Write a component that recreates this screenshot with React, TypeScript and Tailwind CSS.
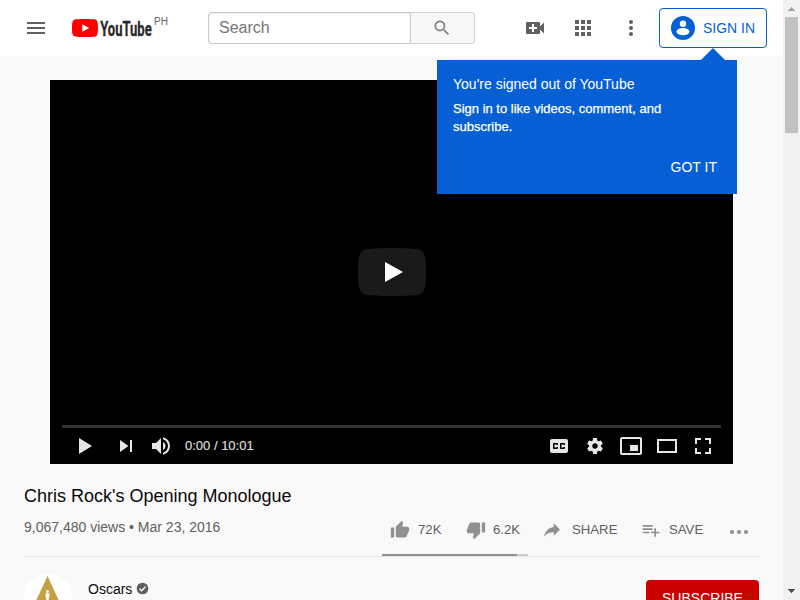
import type { ReactNode } from "react";

function Icon({ d, size = 24, box = 24, className = "" }: { d: string; size?: number; box?: number; className?: string }) {
  return (
    <svg width={size} height={size} viewBox={`0 0 ${box} ${box}`} className={`shrink-0 ${className}`} fill="currentColor" fillRule="evenodd">
      <path d={d} />
    </svg>
  );
}

const MENU = "M3 18h18v-2H3v2zm0-5h18v-2H3v2zm0-7v2h18V6H3z";
const SEARCH =
  "M15.5 14h-.79l-.28-.27C15.41 12.59 16 11.11 16 9.5 16 5.91 13.09 3 9.5 3S3 5.91 3 9.5 5.91 16 9.5 16c1.61 0 3.09-.59 4.23-1.57l.27.28v.79l5 4.99L20.49 19l-4.99-5zm-6 0C7.01 14 5 11.99 5 9.5S7.01 5 9.5 5 14 7.01 14 9.5 11.99 14 9.5 14z";
const CREATE =
  "M17,10.5V7A1,1 0 0,0 16,6H4A1,1 0 0,0 3,7V17A1,1 0 0,0 4,18H16A1,1 0 0,0 17,17V13.5L21,17.5V6.5L17,10.5M14,13H11V16H9V13H6V11H9V8H11V11H14V13Z";
const APPS =
  "M4 8h4V4H4v4zm6 12h4v-4h-4v4zm-6 0h4v-4H4v4zm0-6h4v-4H4v4zm6 0h4v-4h-4v4zm6-10v4h4V4h-4zm-6 4h4V4h-4v4zm6 6h4v-4h-4v4zm0 6h4v-4h-4v4z";
const MORE_VERT =
  "M12 8c1.1 0 2-.9 2-2s-.9-2-2-2-2 .9-2 2 .9 2 2 2zm0 2c-1.1 0-2 .9-2 2s.9 2 2 2 2-.9 2-2-.9-2-2-2zm0 6c-1.1 0-2 .9-2 2s.9 2 2 2 2-.9 2-2-.9-2-2-2z";
const THUMB_UP =
  "M1 21h4V9H1v12zm22-11c0-1.1-.9-2-2-2h-6.31l.95-4.57.03-.32c0-.41-.17-.79-.44-1.06L14.17 1 7.59 7.59C7.22 7.95 7 8.45 7 9v10c0 1.1.9 2 2 2h9c.83 0 1.54-.5 1.84-1.22l3.02-7.05c.09-.23.14-.47.14-.73v-2z";
const THUMB_DOWN =
  "M15 3H6c-.83 0-1.54.5-1.84 1.22l-3.02 7.05c-.09.23-.14.47-.14.73v2c0 1.1.9 2 2 2h6.31l-.95 4.57-.03.32c0 .41.17.79.44 1.06L9.83 23l6.59-6.59c.36-.36.58-.86.58-1.41V5c0-1.1-.9-2-2-2zm4 0v12h4V3h-4z";
const SHARE =
  "M11.7333 8.26667V4L19.2 11.4667L11.7333 18.9333V14.56C6.4 14.56 2.66667 16.2667 0 20C1.06667 14.6667 4.26667 9.33333 11.7333 8.26667Z";
const SAVE = "M14 10H2v2h12v-2zm0-4H2v2h12V6zm4 8v-4h-2v4h-4v2h4v4h2v-4h4v-2h-4zM2 16h8v-2H2v2z";

const PLAY = "M12,26 25,18 12,10z";
const NEXT = "M12,24 20.5,18 12,12V24zM22,12v12h2V12h-2z";
const VOLUME =
  "M8,21 L12,21 L17,26 L17,10 L12,15 L8,15 L8,21 Z M19,14 L19,22 C20.48,21.32 21.5,19.77 21.5,18 C21.5,16.26 20.48,14.74 19,14 Z M19,11.29 C21.89,12.15 24,14.83 24,18 C24,21.17 21.89,23.85 19,24.71 L19,26.77 C23.01,25.86 26,22.28 26,18 C26,13.72 23.01,10.14 19,9.23 L19,11.29 Z";
const CAPTIONS =
  "M11,11 C9.89,11 9,11.9 9,13 L9,23 C9,24.1 9.89,25 11,25 L25,25 C26.1,25 27,24.1 27,23 L27,13 C27,11.9 26.1,11 25,11 L11,11 Z M17,17 L15.5,17 L15.5,16.5 L13.5,16.5 L13.5,19.5 L15.5,19.5 L15.5,19 L17,19 L17,20 C17,20.55 16.55,21 16,21 L13,21 C12.45,21 12,20.55 12,20 L12,16 C12,15.45 12.45,15 13,15 L16,15 C16.55,15 17,15.45 17,16 L17,17 Z M24,17 L22.5,17 L22.5,16.5 L20.5,16.5 L20.5,19.5 L22.5,19.5 L22.5,19 L24,19 L24,20 C24,20.55 23.55,21 23,21 L20,21 C19.45,21 19,20.55 19,20 L19,16 C19,15.45 19.45,15 20,15 L23,15 C23.55,15 24,15.45 24,16 L24,17 Z";
const SETTINGS =
  "m 23.94,18.78 c .03,-0.25 .05,-0.51 .05,-0.78 0,-0.27 -0.02,-0.52 -0.05,-0.78 l 1.68,-1.32 c .15,-0.12 .19,-0.33 .09,-0.51 l -1.6,-2.76 c -0.09,-0.17 -0.31,-0.24 -0.48,-0.17 l -1.99,.8 c -0.41,-0.32 -0.86,-0.58 -1.35,-0.78 l -0.30,-2.12 c -0.02,-0.19 -0.19,-0.33 -0.39,-0.33 l -3.2,0 c -0.2,0 -0.36,.14 -0.39,.33 l -0.30,2.12 c -0.48,.2 -0.93,.47 -1.35,.78 l -1.99,-0.8 c -0.18,-0.07 -0.39,0 -0.48,.17 l -1.6,2.76 c -0.10,.17 -0.05,.39 .09,.51 l 1.68,1.32 c -0.03,.25 -0.05,.52 -0.05,.78 0,.26 .02,.52 .05,.78 l -1.68,1.32 c -0.15,.12 -0.19,.33 -0.09,.51 l 1.6,2.76 c .09,.17 .31,.24 .48,.17 l 1.99,-0.8 c .41,.32 .86,.58 1.35,.78 l .30,2.12 c .02,.19 .19,.33 .39,.33 l 3.2,0 c .2,0 .36,-0.14 .39,-0.33 l .30,-2.12 c .48,-0.2 .93,-0.47 1.35,-0.78 l 1.99,.8 c .18,.07 .39,0 .48,-0.17 l 1.6,-2.76 c .09,-0.17 .05,-0.39 -0.09,-0.51 l -1.68,-1.32 0,0 z m -5.94,2.01 c -1.54,0 -2.8,-1.25 -2.8,-2.8 0,-1.54 1.25,-2.8 2.8,-2.8 1.54,0 2.8,1.25 2.8,2.8 0,1.54 -1.25,2.8 -2.8,2.8 l 0,0 z";
const MINIPLAYER =
  "M25,17 L17,17 L17,23 L25,23 L25,17 Z M29,25 L29,10.98 C29,9.88 28.1,9 27,9 L9,9 C7.9,9 7,9.88 7,10.98 L7,25 C7,26.1 7.9,27 9,27 L27,27 C28.1,27 29,26.1 29,25 Z M27,25.02 L9,25.02 L9,10.97 L27,10.97 L27,25.02 Z";
const THEATER = "m 28,11 0,14 -20,0 0,-14 z m -18,2 16,0 0,10 -16,0 0,-10 z";
const FULLSCREEN = "M10 16h2v-4h4v-2h-6zM20 10v2h4v4h2v-6zM24 24h-4v2h6v-6h-2zM12 20h-2v6h6v-2h-4z";

function Logo() {
  return (
    <div className="ml-6 flex h-6 w-[98px] items-start">
      <svg width="80" height="24" viewBox="0 0 80 24" className="shrink-0 overflow-visible">
        <g transform="translate(0 3) scale(1.0833 1.0645) translate(0 -3.545)">
          <path
            fill="#ff0000"
            d="M23.498 6.186a3.016 3.016 0 0 0-2.122-2.136C19.505 3.545 12 3.545 12 3.545s-7.505 0-9.377.505A3.017 3.017 0 0 0 .502 6.186C0 8.07 0 12 0 12s0 3.93.502 5.814a3.016 3.016 0 0 0 2.122 2.136c1.871.505 9.376.505 9.376.505s7.505 0 9.377-.505a3.015 3.015 0 0 0 2.122-2.136C24 15.93 24 12 24 12s0-3.93-.502-5.814z"
          />
          <path fill="#fff" d="M9.545 15.568V8.432L15.818 12z" />
        </g>
        <text
          x="28.2"
          y="19.5"
          textLength="51.5"
          lengthAdjust="spacingAndGlyphs"
          fill="#282828"
          stroke="#282828"
          strokeWidth="0.3"
          className="font-['Roboto',sans-serif] text-[21px] font-bold"
        >
          YouTube
        </text>
      </svg>
      <span className="ml-0.5 text-[10px] leading-3 text-[#606060]">PH</span>
    </div>
  );
}

function Tooltip() {
  return (
    <div className="absolute top-[60px] left-[437px] z-10 h-[134px] w-[300px] bg-[#065fd4] px-4 pt-[15px] text-white">
      <svg width="24" height="12" viewBox="0 0 24 12" className="absolute -top-3 left-[264px]">
        <path d="M0 12 12 0 24 12z" fill="#065fd4" />
      </svg>
      <p className="text-sm leading-[18px]">You're signed out of YouTube</p>
      <p className="mt-[7px] text-[13px] leading-[18px] [-webkit-text-stroke:0.25px_white]">
        Sign in to like videos, comment, and
        <br />
        subscribe.
      </p>
      <p className="mt-[21px] pr-1 text-right text-sm leading-5">GOT IT</p>
    </div>
  );
}

function Header() {
  return (
    <header className="flex h-14 items-center bg-white pr-4 pl-6 text-[#606060]">
      <Icon d={MENU} />
      <Logo />
      <div className="ml-[38px] flex h-8 w-[267px]">
        <div className="flex w-[202px] items-center rounded-l-sm border border-r-0 border-[#c8c8c8] pl-2.5 text-base text-[#757575] shadow-[inset_0_1px_2px_#eee]">
          Search
        </div>
        <div className="flex flex-1 items-center justify-center rounded-r-sm border border-[#d3d3d3] border-l-[#c8c8c8] bg-[#f8f8f8] text-[#808080]">
          <Icon d={SEARCH} size={20} className="-ml-px" />
        </div>
      </div>
      <div className="ml-12 flex gap-6">
        <Icon d={CREATE} />
        <Icon d={APPS} />
        <Icon d={MORE_VERT} />
      </div>
      <div className="ml-4 flex h-10 w-[108px] items-center rounded-sm border border-[#065fd4] pl-[11px] text-sm text-[#065fd4]">
        <svg width="24" height="24" viewBox="0 0 24 24" className="mr-2 shrink-0">
          <circle cx="12" cy="12" r="12" fill="#065fd4" />
          <circle cx="12" cy="7.7" r="3.2" fill="#fff" />
          <ellipse cx="12" cy="15.6" rx="6.5" ry="3.6" fill="#fff" />
        </svg>
        <span className="whitespace-nowrap">SIGN IN</span>
      </div>
    </header>
  );
}

function Player() {
  return (
    <div className="mx-[50px] mt-6 flex h-[384px] flex-col bg-black px-3 text-[#e6e6e6]">
      <div className="flex h-[345px] items-center justify-center pt-[39px]">
        <svg width="68" height="48" viewBox="0 0 68 48">
          <path
            fill="#1a1a1a"
            d="M66.52,7.74c-0.78-2.93-2.49-5.41-5.42-6.19C55.79,.13,34,0,34,0S12.21,.13,6.9,1.55 C3.97,2.33,2.27,4.81,1.48,7.74C0.06,13.05,0,24,0,24s0.06,10.95,1.48,16.26c0.78,2.93,2.49,5.41,5.42,6.19 C12.21,47.87,34,48,34,48s21.79-0.13,27.1-1.55c2.93-0.78,4.64-3.26,5.42-6.19C67.94,34.95,68,24,68,24S67.94,13.05,66.52,7.74z"
          />
          <path d="M45,24 27,14 27,34z" fill="#fff" />
        </svg>
      </div>
      <div className="h-[3px] bg-[#333]" />
      <div className="flex h-9 items-center">
        <Icon d={PLAY} size={36} box={36} className="ml-[5px]" />
        <Icon d={NEXT} size={36} box={36} className="ml-[5px]" />
        <Icon d={VOLUME} size={36} box={36} />
        <span className="ml-[5px] text-[13px] text-[#ddd] [-webkit-text-stroke:0.2px_#ddd]">0:00 / 10:01</span>
        <div className="ml-auto flex">
          {[CAPTIONS, SETTINGS, MINIPLAYER, THEATER, FULLSCREEN].map((d) => (
            <Icon key={d} d={d} size={36} box={36} />
          ))}
        </div>
      </div>
    </div>
  );
}

function Action({ d, label, className }: { d: string; label: ReactNode; className: string }) {
  return (
    <div className={`flex items-center text-[13.2px] ${className}`}>
      <Icon d={d} size={20} className="text-[#909090]" />
      <span className="leading-5 whitespace-nowrap">{label}</span>
    </div>
  );
}

function Info() {
  return (
    <section className="mx-6 mt-[21px] flex h-[72px] flex-col border-b border-[#e0e0e0]">
      <h1 className="text-lg leading-[22px] text-[#0a0a0a]">Chris Rock's Opening Monologue</h1>
      <div className="flex flex-1 text-sm text-[#606060]">
        <p className="mt-[10px] w-[358px] leading-5">9,067,480 views • Mar 23, 2016</p>
        <div className="flex flex-col justify-between pt-3">
          <div className="flex h-[22px] w-[146px] items-center pl-2">
            <Action d={THUMB_UP} label="72K" className="w-[76px] gap-2" />
            <Action d={THUMB_DOWN} label="6.2K" className="gap-[7px]" />
          </div>
          <div className="flex h-0.5 w-[146px] bg-[#ccc]">
            <div className="w-[135px] bg-[#909090]" />
          </div>
        </div>
        <div className="mt-3 flex h-[22px] pl-4">
          <Action d={SHARE} label="SHARE" className="w-[97px] gap-2" />
          <Action d={SAVE} label="SAVE" className="w-[87px] gap-2" />
          <svg width="22" height="22" viewBox="0 0 22 22" fill="#909090">
            <circle cx="4" cy="13" r="2.1" />
            <circle cx="11" cy="13" r="2.1" />
            <circle cx="18" cy="13" r="2.1" />
          </svg>
        </div>
      </div>
    </section>
  );
}

function Channel() {
  return (
    <section className="mx-6 mt-4 flex items-start">
      <svg width="48" height="48" viewBox="0 0 48 48" className="shrink-0">
        <circle cx="24" cy="24" r="24" fill="#fff" />
        <path d="M23.5 3 36 30H11z" fill="#c5a043" />
        <circle cx="23.5" cy="18.4" r="1.4" fill="#fff" />
        <path d="M21.5 20.3h4v3.5l-.8 1.5V30h-2.4v-4.7l-.8-1.5z" fill="#fff" />
      </svg>
      <div className="ml-4 flex h-8 items-center gap-1 text-sm text-[#0a0a0a]">
        <span>Oscars</span>
        <svg width="13" height="13" viewBox="0 0 24 24" fill="none" className="-mt-px">
          <circle cx="12" cy="12" r="10.8" fill="#606060" />
          <path d="m6.5 12.5 3.8 3.8 7.2-7.8" stroke="#fff" strokeWidth="2.6" />
        </svg>
      </div>
      <div className="mt-[7px] ml-auto flex h-[37px] w-[113px] items-center justify-center rounded-sm bg-[#cc0000] pb-0.5 text-sm text-white">SUBSCRIBE</div>
    </section>
  );
}

function Scrollbar() {
  return (
    <aside className="flex w-[17px] flex-col items-center bg-[#f1f1f1]">
      <svg width="17" height="17" viewBox="0 0 17 17" shapeRendering="crispEdges">
        <path d="M5 11V10h1V9h1V8h1V7h1v1h1v1h1v1h1v1z" fill="#a3a3a3" />
      </svg>
      <div className="h-[116px] w-[13px] bg-[#c1c1c1]" />
      <svg width="17" height="17" viewBox="0 0 17 17" shapeRendering="crispEdges" className="mt-auto">
        <path d="M5 6v1h1v1h1v1h1v1h1V9h1V8h1V7h1V6z" fill="#505050" />
      </svg>
    </aside>
  );
}

export default function App() {
  return (
    <div className="relative flex h-[600px] w-[800px] overflow-hidden bg-[#f9f9f9] font-['Liberation_Sans',Arial,sans-serif]">
      <main className="h-[600px] w-[783px] overflow-hidden">
        <Header />
        <Player />
        <Info />
        <Channel />
      </main>
      <Scrollbar />
      <Tooltip />
    </div>
  );
}
